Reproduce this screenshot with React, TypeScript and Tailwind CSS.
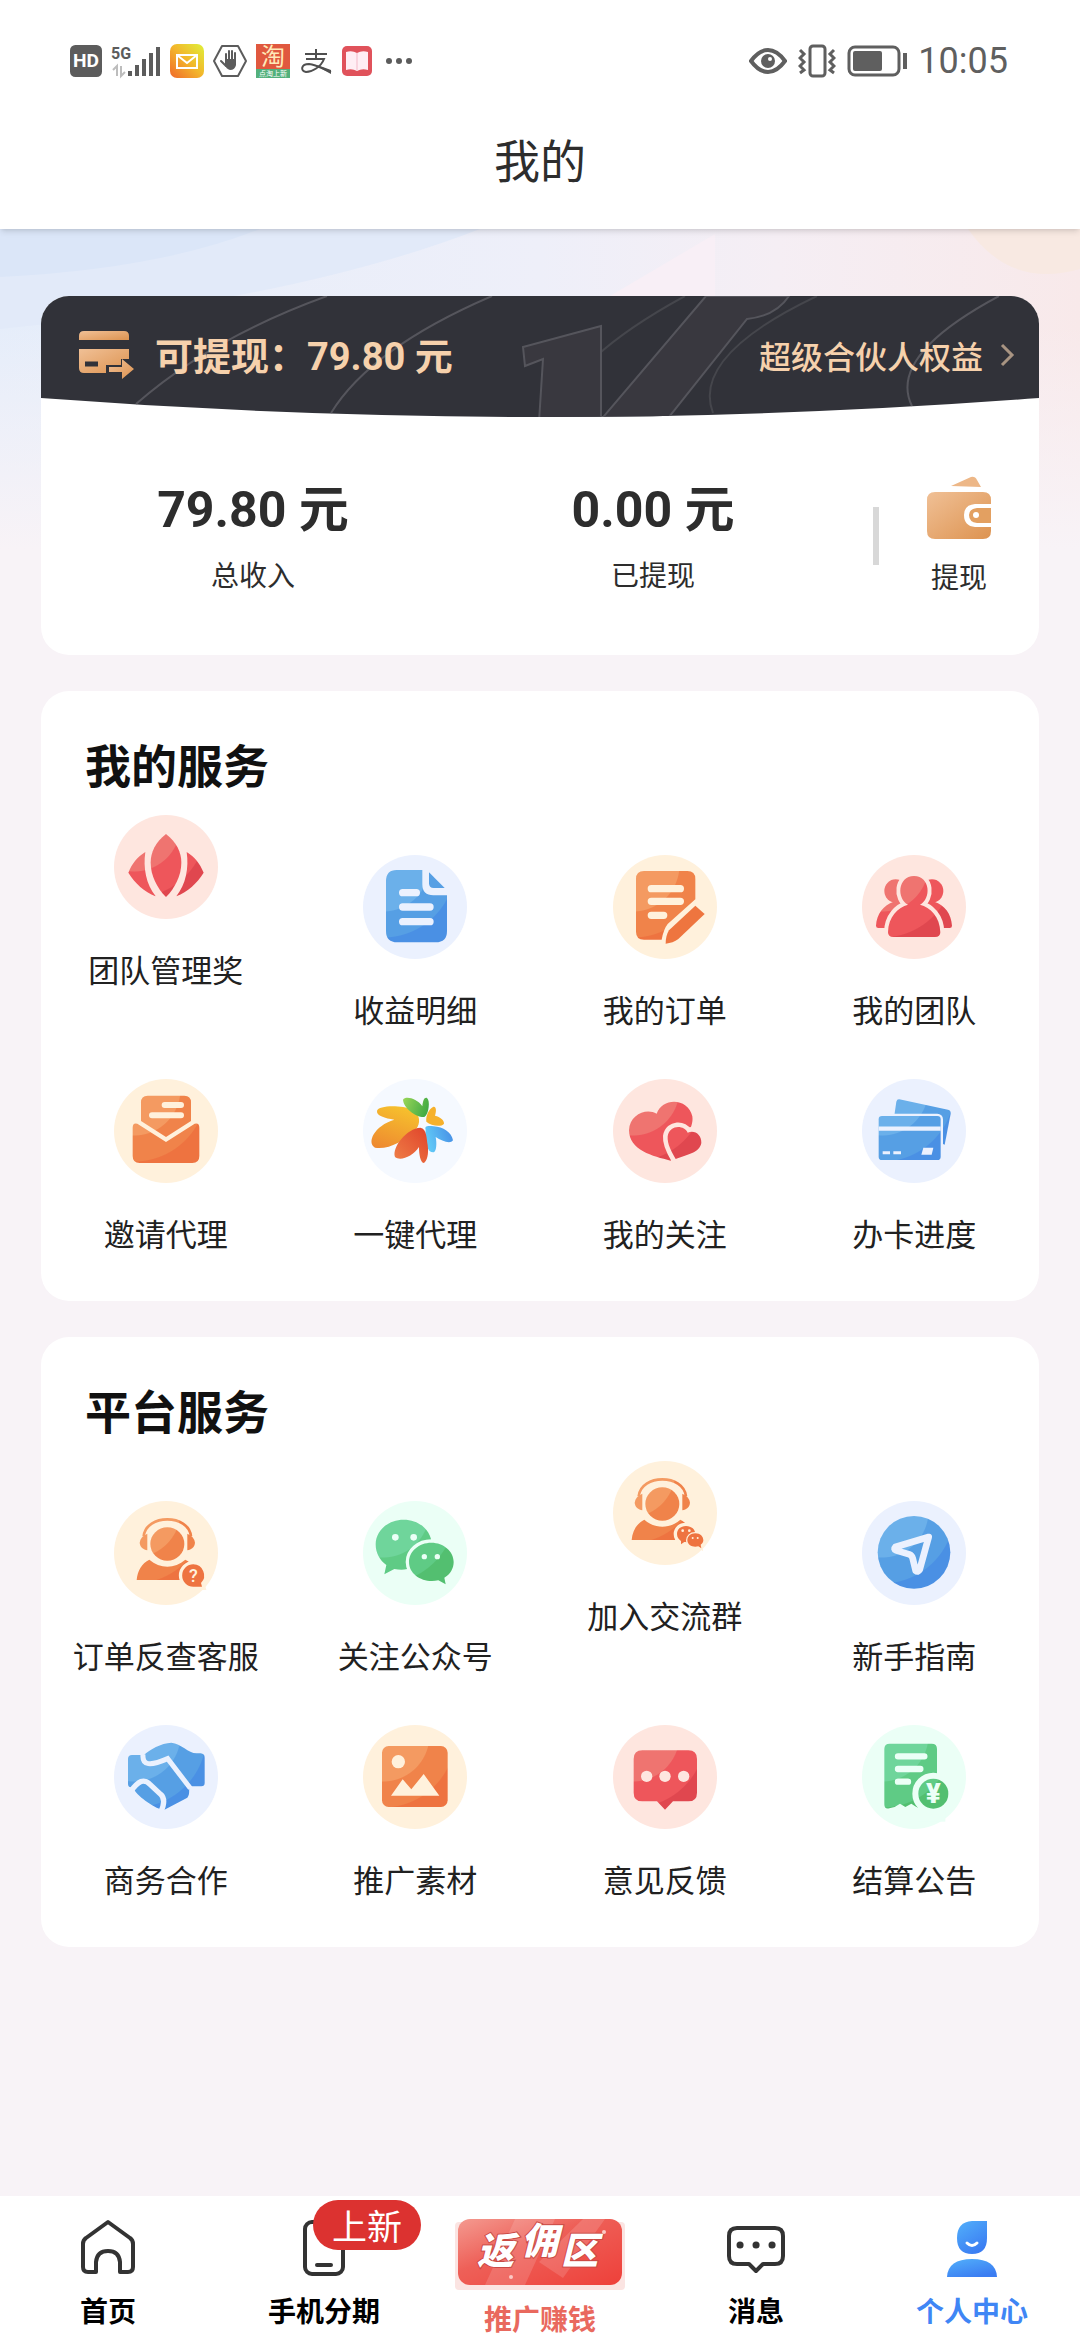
import type { ReactNode } from 'react'

type Tone = 'red' | 'orange' | 'blue' | 'green' | 'rainbow'

type Service = {
  label: string
  tone: Tone
  art: ReactNode
  raised?: boolean
}

const DISC: Record<Tone, string> = {
  red: '#fee6df',
  orange: '#fff1dc',
  blue: '#ebf1fe',
  green: '#ebfff6',
  rainbow: '#f5f9ff',
}

const SHADES: { tone: Tone; light: string; mid: string; deep: string }[] = [
  { tone: 'red', light: '#ef7470', mid: '#ee565b', deep: '#e0474f' },
  { tone: 'orange', light: '#f49a61', mid: '#f0834a', deep: '#ee7340' },
  { tone: 'blue', light: '#6bb0ea', mid: '#569fe4', deep: '#4a90e4' },
  { tone: 'green', light: '#6fd59b', mid: '#5fcb85', deep: '#53bf70' },
]

function Shades() {
  return (
    <svg className="absolute size-0" aria-hidden>
      <defs>
        {SHADES.map((s) => (
          <radialGradient
            key={s.tone}
            id={`shade-${s.tone}`}
            gradientUnits="userSpaceOnUse"
            cx="60"
            cy="30"
            r="300"
          >
            <stop offset="0.1" stopColor={s.light} />
            <stop offset="0.46" stopColor={s.light} />
            <stop offset="0.47" stopColor={s.mid} />
            <stop offset="0.72" stopColor={s.mid} />
            <stop offset="0.73" stopColor={s.deep} />
          </radialGradient>
        ))}
        <linearGradient id="gold" x1="0" y1="0" x2="1" y2="1">
          <stop offset="0" stopColor="#f0c096" />
          <stop offset="1" stopColor="#dd9350" />
        </linearGradient>
        <linearGradient id="member" x1="0" y1="0" x2="0.6" y2="1">
          <stop offset="0" stopColor="#52b0fb" />
          <stop offset="1" stopColor="#3b7df2" />
        </linearGradient>
        <linearGradient id="rebate" x1="0" y1="0" x2="1" y2="1">
          <stop offset="0" stopColor="#f49a90" />
          <stop offset="0.4" stopColor="#ee6058" />
          <stop offset="1" stopColor="#ee403a" />
        </linearGradient>
        <linearGradient id="mail" x1="1" y1="0" x2="0" y2="1">
          <stop offset="0" stopColor="#dff03a" />
          <stop offset="0.5" stopColor="#f3b52b" />
          <stop offset="1" stopColor="#f0682b" />
        </linearGradient>
        <linearGradient id="petal-yellow" x1="0.6" y1="0" x2="0.2" y2="1">
          <stop offset="0" stopColor="#f6c02d" />
          <stop offset="1" stopColor="#ee8a30" />
        </linearGradient>
        <linearGradient id="petal-red" x1="1" y1="0" x2="0" y2="1">
          <stop offset="0" stopColor="#e0432a" />
          <stop offset="1" stopColor="#ef8048" />
        </linearGradient>
        <linearGradient id="petal-green" x1="0" y1="0" x2="1" y2="0.3">
          <stop offset="0" stopColor="#9ad658" />
          <stop offset="1" stopColor="#46ac45" />
        </linearGradient>
        <linearGradient id="petal-blue" x1="0" y1="0.6" x2="1" y2="0.3">
          <stop offset="0" stopColor="#62cdf8" />
          <stop offset="1" stopColor="#4790e6" />
        </linearGradient>
      </defs>
    </svg>
  )
}

function Agent() {
  return (
    <>
      <path
        d="M89 106 C96 38 224 38 231 106"
        fill="none"
        stroke="url(#shade-orange)"
        strokeWidth="8"
      />
      <path d="M100 98 V148 C88 146 78 138 77 125 C78 113 86 104 100 98Z" />
      <path d="M220 98 V148 C232 146 242 138 243 125 C242 113 234 104 220 98Z" />
      <ellipse cx="160" cy="129" rx="51" ry="50" />
      <path d="M68 237 C70 210 84 186 106 176 C138 204 182 204 214 176 C236 186 250 210 252 237Z" />
    </>
  )
}

const MY_SERVICES: Service[] = [
  {
    label: '团队管理奖',
    tone: 'red',
    raised: true,
    art: (
      <>
        <path d="M156 57 C188 82 202 112 202 143 C202 182 182 220 156 246 C130 220 110 182 110 143 C110 112 124 82 156 57Z" />
        <path d="M94 111 C70 126 54 146 43 173 C64 206 90 230 125 244 C96 208 87 158 94 111Z" />
        <path d="M218 111 C242 126 258 146 269 173 C248 206 222 230 187 244 C216 208 225 158 218 111Z" />
      </>
    ),
  },
  {
    label: '收益明细',
    tone: 'blue',
    art: (
      <>
        <path d="M101 45 H178 V88 Q178 121 211 121 H252 V228 Q252 262 218 262 H103 Q69 262 69 228 V79 Q69 45 101 45Z" />
        <path d="M198 52 L245 99 H212 Q198 99 198 85Z" />
        <path d="M119 113 H160 M119 156 H201 M119 200 H201" fill="none" stroke="#ebf1fe" strokeWidth="22" strokeLinecap="round" />
      </>
    ),
  },
  {
    label: '我的订单',
    tone: 'orange',
    art: (
      <>
        <path d="M93 48 H223 Q247 48 247 72 V133 L164 207 Q152 222 146 254 H93 Q69 254 69 230 V72 Q69 48 93 48Z" />
        <path d="M115 101 H202 M115 139 H202 M115 181 H152" fill="none" stroke="#fff1dc" strokeWidth="22" strokeLinecap="round" />
        <path d="M247 152 L275 177 L196 252 Q180 264 158 266 Q158 242 168 226Z" fill="#ee753f" />
      </>
    ),
  },
  {
    label: '我的团队',
    tone: 'red',
    art: (
      <>
        <ellipse cx="101" cy="108" rx="34" ry="35" />
        <ellipse cx="210" cy="108" rx="34" ry="35" />
        <path d="M42 212 C44 176 65 150 95 140 H217 C248 150 268 176 270 212 Q270 219 263 219 H238 L156 180 L72 219 H49 Q42 219 42 212Z" />
        <path
          d="M94 246 Q78 246 78 232 C79 185 108 157 138 149 C104 132 106 64 156 63 C206 64 208 132 174 149 C205 157 234 185 235 232 Q235 246 219 246Z"
          stroke="#fee6df"
          strokeWidth="24"
          paintOrder="stroke"
        />
      </>
    ),
  },
  {
    label: '邀请代理',
    tone: 'orange',
    art: (
      <>
        <path d="M101 50 H211 Q231 50 231 70 V126 L156 174 L81 126 V70 Q81 50 101 50Z" />
        <path d="M152 78 H201 M114 109 H201" fill="none" stroke="#fff1dc" strokeWidth="18" strokeLinecap="round" />
        <path d="M56 146 Q56 130 70 134 L156 189 L242 134 Q256 130 256 146 V231 Q256 252 235 252 H77 Q56 252 56 231Z" />
      </>
    ),
  },
  {
    label: '一键代理',
    tone: 'rainbow',
    art: (
      <>
        <path d="M42 96 C46 78 116 78 148 92 C172 106 174 132 158 152 C130 184 72 214 36 206 C10 190 34 140 94 122 C66 118 40 110 42 96Z" fill="url(#petal-yellow)" />
        <path d="M120 62 C128 50 162 58 178 82 C180 64 184 54 192 57 C202 64 198 106 184 114 C160 116 122 88 120 62Z" fill="url(#petal-green)" />
        <path d="M210 84 C218 80 222 92 216 110 C232 114 244 124 243 134 C234 146 204 140 190 128 C188 110 198 90 210 84Z" fill="#f6b12b" />
        <path d="M188 152 C184 140 194 140 212 142 C240 144 266 160 270 184 C262 196 236 186 218 174 C222 194 220 218 212 220 C194 222 184 190 188 152Z" fill="url(#petal-blue)" />
        <path d="M96 234 C86 204 132 148 172 146 C192 150 190 178 194 198 C198 224 192 248 182 252 C172 250 168 226 168 204 C150 232 112 248 96 234Z" fill="url(#petal-red)" />
      </>
    ),
  },
  {
    label: '我的关注',
    tone: 'red',
    art: (
      <>
        <path d="M173 245 C120 232 48 214 48 154 C50 106 100 86 131 104 C148 54 226 56 238 112 C244 150 206 190 173 245Z" />
        <path
          d="M188 240 C176 220 162 194 164 172 C170 136 214 138 224 161 C246 152 266 168 265 192 C260 222 222 226 188 240Z"
          stroke="#fee6df"
          strokeWidth="28"
          paintOrder="stroke"
        />
      </>
    ),
  },
  {
    label: '办卡进度',
    tone: 'blue',
    art: (
      <>
        <path d="M112 61 L258 92 Q267 94 266 104 L248 197 L94 130 L103 68 Q105 60 112 61Z" />
        <rect x="50" y="111" width="186" height="132" rx="10" stroke="#ebf1fe" strokeWidth="14" paintOrder="stroke" />
        <path d="M50 149 H236" stroke="#ebf1fe" strokeWidth="13" />
        <path d="M62 221 H84 M94 221 H117" stroke="#ebf1fe" strokeWidth="9" />
        <path d="M184 206 H214 L209 227 H178Z" fill="#ebf1fe" />
      </>
    ),
  },
]

const PLATFORM_SERVICES: Service[] = [
  {
    label: '订单反查客服',
    tone: 'orange',
    art: (
      <>
        <Agent />
        <path
          d="M238 190 A33 33 0 1 0 238 257 H264 L261 246 A33 33 0 0 0 238 190Z"
          fill="#ee7340"
          stroke="#fff1dc"
          strokeWidth="20"
          paintOrder="stroke"
        />
        <text x="238" y="243" textAnchor="middle" fontSize="54" fontWeight="500" fill="#fff1dc" fontFamily="Roboto, sans-serif">
          ?
        </text>
      </>
    ),
  },
  {
    label: '关注公众号',
    tone: 'green',
    art: (
      <>
        <path d="M122 56 C74 56 38 90 38 130 C38 156 50 178 70 192 L64 220 L94 204 C150 214 206 184 206 130 C206 90 170 56 122 56Z" />
        <circle cx="97" cy="109" r="10" fill="#ebfff6" />
        <circle cx="152" cy="109" r="10" fill="#ebfff6" />
        <path
          d="M205 125 C168 125 138 151 138 183 C138 222 182 248 226 238 L248 250 L244 230 C262 220 272 202 272 183 C272 151 242 125 205 125Z"
          stroke="#ebfff6"
          strokeWidth="20"
          paintOrder="stroke"
        />
        <circle cx="184" cy="167" r="8" fill="#ebfff6" />
        <circle cx="223" cy="167" r="8" fill="#ebfff6" />
      </>
    ),
  },
  {
    label: '加入交流群',
    tone: 'orange',
    raised: true,
    art: (
      <>
        <g transform="translate(-12 0)">
          <Agent />
        </g>
        <g fill="#ee7340" stroke="#fff1dc" paintOrder="stroke">
          <path d="M219 195 C202 195 192 206 192 219 C192 230 198 236 204 240 V250 L214 243 C236 246 247 232 247 219 C247 206 236 195 219 195Z" strokeWidth="20" />
          <path d="M247 217 C232 217 223 227 223 238 C223 252 240 261 256 256 L265 262 L263 251 C268 248 271 243 271 238 C271 227 262 217 247 217Z" strokeWidth="8" />
        </g>
        <g fill="#fff1dc">
          <circle cx="209" cy="209" r="4" />
          <circle cx="229" cy="209" r="4" />
          <circle cx="239" cy="231" r="3" />
          <circle cx="254" cy="231" r="3" />
        </g>
      </>
    ),
  },
  {
    label: '新手指南',
    tone: 'blue',
    art: (
      <>
        <circle cx="156" cy="154" r="109" />
        <path
          d="M200 108 L100 138 Q94 144 102 148 L142 160 Q150 163 152 172 L161 209 Q168 215 173 206Z"
          fill="none"
          stroke="#ebf1fe"
          strokeWidth="20"
          strokeLinejoin="round"
        />
      </>
    ),
  },
  {
    label: '商务合作',
    tone: 'blue',
    art: (
      <>
        <path d="M42 102 Q42 90 54 90 H90 C106 74 142 54 172 53 C202 56 222 84 248 85 H260 Q272 86 272 98 V174 Q272 184 262 184 H228 C222 190 230 206 220 218 L150 255 C130 256 70 214 62 196 L56 187 H50 Q42 186 42 176Z" />
        <path
          d="M87 88 C84 122 108 124 161 101 L229 190"
          fill="none"
          stroke="#ebf1fe"
          strokeWidth="15"
        />
        <path
          d="M48 202 C74 166 90 160 108 178 L140 208 Q158 224 140 262"
          fill="none"
          stroke="#ebf1fe"
          strokeWidth="16"
        />
      </>
    ),
  },
  {
    label: '推广素材',
    tone: 'orange',
    art: (
      <>
        <rect x="57" y="63" width="197" height="183" rx="20" />
        <circle cx="106" cy="110" r="20" fill="#fff1dc" />
        <path d="M84 212 L119 163 L145 193 L182 147 L229 212Z" fill="#fff1dc" />
      </>
    ),
  },
  {
    label: '意见反馈',
    tone: 'red',
    art: (
      <>
        <path d="M88 76 H226 Q252 76 252 102 V203 Q252 229 226 229 H180 L156 254 L132 229 H88 Q62 229 62 203 V102 Q62 76 88 76Z" />
        <g fill="#fee6df">
          <circle cx="101" cy="154" r="17" />
          <circle cx="156" cy="154" r="17" />
          <circle cx="212" cy="154" r="17" />
        </g>
      </>
    ),
  },
  {
    label: '结算公告',
    tone: 'green',
    art: (
      <>
        <path d="M83 56 H209 Q225 56 225 72 V251 H176 L162 245 L148 236 L130 246 L114 236 L98 246 L82 250 Q67 254 67 238 V72 Q67 56 83 56Z" />
        <path d="M108 94 H187 M108 132 H175 M108 170 H138" fill="none" stroke="#ebfff6" strokeWidth="19" strokeLinecap="round" />
        <path d="M168 216 H250 V290 H168Z" fill="#ebfff6" />
        <circle cx="214" cy="206" r="45" stroke="#ebfff6" strokeWidth="36" paintOrder="stroke" />
        <text x="214" y="235" textAnchor="middle" fontSize="82" fontWeight="900" fill="#ebfff6" fontFamily="Roboto, sans-serif">
          ¥
        </text>
      </>
    ),
  },
]

function ServiceLink({ label, tone, art, raised }: Service) {
  return (
    <a href="#" className={`flex flex-col items-center gap-[30px] ${raised ? 'pb-10' : ''}`}>
      <svg viewBox="0 0 312 312" className="size-[104px]" aria-hidden>
        <circle cx="156" cy="156" r="156" fill={DISC[tone]} />
        <g fill={`url(#shade-${tone})`}>{art}</g>
      </svg>
      <span className="text-[31px] leading-10 whitespace-nowrap text-[#212121]">{label}</span>
    </a>
  )
}

function ServiceCard({ title, items }: { title: string; items: Service[] }) {
  return (
    <section className="rounded-[28px] bg-white pt-10 pb-12">
      <h2 className="mb-5 px-11 text-[46px] leading-16 font-bold text-[#111]">{title}</h2>
      <div className="grid grid-cols-4 items-end gap-y-[50px]">
        {items.map((item) => (
          <ServiceLink key={item.label} {...item} />
        ))}
      </div>
    </section>
  )
}

function StatusBar() {
  return (
    <div className="flex h-[70px] items-center justify-between pr-[72px] pl-[70px] text-[#5f5f5f]">
      <div className="flex items-center gap-[9px]">
        <svg viewBox="0 0 30 30" className="size-8" aria-hidden>
          <rect width="30" height="30" rx="5" fill="#5c5c5c" />
          <text x="15" y="21" textAnchor="middle" fontSize="18" fontWeight="700" fill="#fff" fontFamily="Roboto, sans-serif">
            HD
          </text>
        </svg>
        <svg viewBox="0 0 50 32" className="h-8 w-[50px] overflow-visible" aria-hidden>
          <text x="0" y="14" fontSize="16" fontWeight="700" fill="#5c5c5c" fontFamily="Roboto, sans-serif">
            5G
          </text>
          <path d="M2 25 L6 21 V31 M10 21 V31 L14 27" fill="none" stroke="#bdbdbd" strokeWidth="2" />
          <path d="M19 26 V31 M26 20 V31 M33 14 V31 M40 8 V31 M47 2 V31" stroke="#5c5c5c" strokeWidth="4" />
        </svg>
        <svg viewBox="0 0 34 34" className="size-[34px]" aria-hidden>
          <rect width="34" height="34" rx="7" fill="url(#mail)" />
          <path d="M7 11 H27 V24 H7Z M7 11 L17 19 L27 11" fill="none" stroke="#fff" strokeWidth="2" />
        </svg>
        <svg viewBox="0 0 34 34" className="size-[34px]" aria-hidden>
          <path d="M9 2 H25 L33 17 L25 32 H9 L1 17Z" fill="none" stroke="#5c5c5c" strokeWidth="2" strokeLinejoin="round" />
          <path d="M13 17 V10 M16 16 V7 M19 16 V7 M22 17 V9 M8 17 L13 22" stroke="#5c5c5c" strokeWidth="2" strokeLinecap="round" />
          <path d="M12 15 H23 V21 Q22 26 17 26 Q13 25 12 21Z" fill="#5c5c5c" />
        </svg>
        <svg viewBox="0 0 34 34" className="size-[34px] overflow-visible" aria-hidden>
          <rect width="34" height="25" fill="#e0583f" />
          <rect y="25" width="34" height="9" fill="#53b07c" />
          <text x="17" y="21" textAnchor="middle" fontSize="24" fill="#ffe9b8" fontFamily="'Noto Sans CJK SC', sans-serif">
            淘
          </text>
          <text x="17" y="32" textAnchor="middle" fontSize="7" fill="#fff" fontFamily="'Noto Sans CJK SC', sans-serif">
            点淘上新
          </text>
        </svg>
        <svg viewBox="0 0 34 34" className="size-[34px]" aria-hidden>
          <path
            d="M6 10 H28 M17 5 V15 M7 15 H25 C22 23 13 28 7 28 C1 27 2 20 10 20 C18 21 24 25 32 28"
            fill="none"
            stroke="#4f4f4f"
            strokeWidth="2"
          />
          <path d="M17 21 Q25 23 32 26 V30 Q24 26 17 21Z" fill="#4f4f4f" />
        </svg>
        <svg viewBox="0 0 30 30" className="size-[30px]" aria-hidden>
          <rect width="30" height="30" rx="5" fill="#e0525b" />
          <path d="M4 6 Q10 4 15 7 Q20 4 26 6 V24 Q20 22 15 25 Q10 22 4 24Z" fill="#ffeef4" />
          <path d="M15 7 V24" stroke="#f3b9c8" strokeWidth="1" />
        </svg>
        <svg viewBox="0 0 28 6" className="ml-1 h-1.5 w-7" fill="#5c5c5c" aria-hidden>
          <circle cx="4" cy="3" r="3" />
          <circle cx="14" cy="3" r="3" />
          <circle cx="24" cy="3" r="3" />
        </svg>
      </div>
      <div className="flex items-center gap-[11px]">
        <svg viewBox="0 0 38 26" className="h-[26px] w-[38px]" aria-hidden>
          <path d="M2 13 Q10 2 19 2 Q28 2 36 13 Q28 24 19 24 Q10 24 2 13Z" fill="none" stroke="#5f5f5f" strokeWidth="4" />
          <circle cx="19" cy="13" r="7" fill="#5f5f5f" />
          <circle cx="21" cy="11" r="2" fill="#fff" />
        </svg>
        <svg viewBox="0 0 38 34" className="h-[34px] w-[38px]" fill="none" stroke="#5f5f5f" strokeWidth="3" aria-hidden>
          <rect x="12" y="2" width="15" height="30" rx="3" />
          <path d="M2 6 L6 10 L2 14 L6 18 L2 22 L6 26 L2 29 M36 6 L32 10 L36 14 L32 18 L36 22 L32 26 L36 29" />
        </svg>
        <svg viewBox="0 0 60 32" className="h-8 w-[60px]" aria-hidden>
          <rect x="2" y="2" width="50" height="28" rx="6" fill="none" stroke="#5f5f5f" strokeWidth="3" />
          <rect x="6" y="6" width="29" height="20" rx="2" fill="#5f5f5f" />
          <path d="M58 8 V24" stroke="#5f5f5f" strokeWidth="4" />
        </svg>
        <span className="font-['Roboto',sans-serif] text-[36px] leading-10">10:05</span>
      </div>
    </div>
  )
}

function Backdrop() {
  return (
    <svg
      viewBox="0 0 1080 320"
      preserveAspectRatio="none"
      className="absolute inset-x-0 top-0 -z-10 h-[320px] w-full"
      aria-hidden
    >
      <defs>
        <linearGradient id="sky" x1="0" y1="0" x2="1" y2="0">
          <stop offset="0" stopColor="#e5edfa" />
          <stop offset="0.5" stopColor="#eeeff9" />
          <stop offset="0.72" stopColor="#f5eef4" />
          <stop offset="1" stopColor="#f8e9ea" />
        </linearGradient>
        <linearGradient id="fade" x1="0" y1="0" x2="0" y2="1">
          <stop offset="0.3" stopColor="#f8f3f7" stopOpacity="0" />
          <stop offset="1" stopColor="#f8f3f7" />
        </linearGradient>
      </defs>
      <rect width="1080" height="320" fill="url(#sky)" />
      <path d="M0 0 H480 Q300 70 0 100Z" fill="#e2eaf9" />
      <path d="M0 0 H260 Q160 40 0 48Z" fill="#dbe6f8" />
      <path d="M715 5 L610 67 H715Z" fill="#f8eff6" />
      <path d="M968 0 H1080 V40 Q1010 60 968 0Z" fill="#f8e9e2" />
      <rect width="1080" height="320" fill="url(#fade)" />
    </svg>
  )
}

function BandArt() {
  return (
    <svg viewBox="0 0 998 122" preserveAspectRatio="none" className="absolute inset-0 size-full" aria-hidden>
      <clipPath id="band">
        <path d="M0 0 H998 V102 Q748 121 499 121 Q250 121 0 102Z" />
      </clipPath>
      <g clipPath="url(#band)" fill="none" stroke="#55555c" strokeWidth="2">
        <rect width="998" height="122" fill="#313239" stroke="none" />
        <path d="M286 0 Q170 42 95 108" />
        <path d="M451 0 Q330 52 290 117" />
        <path d="M644 0 Q530 62 513 120" stroke="#45464c" />
        <path d="M776 0 Q650 60 672 117" stroke="#45464c" />
        <path d="M958 0 Q846 60 871 110" />
        <path d="M560 30 L482 51 L484 70 L502 63 L498 126 H560Z" fill="#39383f" />
        <path d="M665 0 L558 126 H624 L706 23 Q735 20 748 0Z" fill="#39383f" />
      </g>
    </svg>
  )
}

function BalanceCard() {
  return (
    <section className="overflow-hidden rounded-[28px] bg-white text-[#2d2d2d]">
      <div className="relative h-[122px]">
        <BandArt />
        <div className="relative flex h-full items-center justify-between pr-6 pb-1 pl-[38px] text-[#f6d1ac]">
          <div className="flex items-center gap-5">
            <svg viewBox="0 0 56 48" className="h-12 w-14" fill="url(#gold)" aria-hidden>
              <path d="M5 0 H45 Q50 0 50 5 V9 H0 V5 Q0 0 5 0Z" />
              <path d="M0 18 H50 V28 H42 V34 H27 V42 H5 Q0 42 0 37Z" />
              <path d="M6 33 H19" stroke="#313239" strokeWidth="5" />
              <path d="M30 36 H43 V28 L55 38 L43 48 V41 H30Z" />
            </svg>
            <p className="text-[38px] leading-14 font-bold">
              可提现：<span className="font-['Roboto','Noto_Sans_CJK_SC',sans-serif]">79.80 元</span>
            </p>
          </div>
          <a href="#" className="flex items-center gap-4 text-[32px] leading-10 font-medium">
            超级合伙人权益
            <svg viewBox="0 0 16 24" className="h-6 w-4" aria-hidden>
              <path d="M3 2 L13 12 L3 22" fill="none" stroke="#a89482" strokeWidth="3" />
            </svg>
          </a>
        </div>
      </div>
      <div className="grid grid-cols-[2fr_2fr_186px] items-center pt-[58px] pb-[59px] pl-3">
        <Stat label="总收入" value="79.80 元" />
        <Stat label="已提现" value="0.00 元" />
        <div className="flex items-center gap-12 pl-5">
          <span className="h-[58px] w-1.5 bg-[#d8d8d8]" />
          <button type="button" className="flex flex-col items-center gap-4">
            <svg viewBox="0 0 64 64" className="size-16" aria-hidden>
              <path d="M24 10 L44 1 Q48 0 50 4 L54 11Z" fill="#edb787" />
              <path d="M8 16 H56 Q64 16 64 24 V28 H48 Q37 29 37 39 Q37 50 48 51 H64 V55 Q64 63 56 63 H8 Q0 63 0 55 V24 Q0 16 8 16Z" fill="url(#gold)" />
              <path d="M64 32 H50 Q42 33 42 39 Q42 46 50 47 H64Z" fill="#e3a061" />
              <circle cx="49" cy="39" r="3" fill="#fff" />
            </svg>
            <span className="text-[28px] leading-10">提现</span>
          </button>
        </div>
      </div>
    </section>
  )
}

function Stat({ label, value }: { label: string; value: string }) {
  return (
    <div className="flex flex-col items-center gap-3">
      <strong className="font-['Roboto','Noto_Sans_CJK_SC',sans-serif] text-[50px] leading-16 font-bold">{value}</strong>
      <span className="text-[28px] leading-10">{label}</span>
    </div>
  )
}

const LINE = {
  fill: 'none',
  stroke: '#333',
  strokeWidth: 4,
  strokeLinejoin: 'round' as const,
  strokeLinecap: 'round' as const,
}

function BottomNav() {
  return (
    <nav className="mt-auto grid grid-cols-5 items-start bg-white pt-5.5 pb-1 text-[28px] leading-9 font-bold text-black">
      <a href="#" className="flex flex-col items-center gap-3.5">
        <svg viewBox="0 0 60 60" className="size-[60px]" {...LINE} aria-hidden>
          <path d="M30 4 L52 20 Q55 22 55 26 V49 Q55 54 50 54 H42 V44 Q41 33 30 33 Q19 33 18 44 V54 H10 Q5 54 5 49 V26 Q5 22 8 20Z" />
        </svg>
        首页
      </a>
      <a href="#" className="flex flex-col items-center gap-3.5">
        <span className="relative">
          <svg viewBox="0 0 60 60" className="size-[60px]" {...LINE} aria-hidden>
            <rect x="11" y="4" width="38" height="52" rx="7" />
            <path d="M23 47 H37" />
          </svg>
          <span className="absolute -top-[18px] left-[19px] rounded-full bg-[#dc3230] px-[19px] text-[35px] leading-[50px] font-normal whitespace-nowrap text-white">
            上新
          </span>
        </span>
        手机分期
      </a>
      <a href="#" className="flex flex-col items-center gap-2.5 text-[#e9695e]">
        <svg viewBox="0 0 170 72" className="h-[72px] w-[170px] overflow-visible" aria-hidden>
          <rect y="4" width="170" height="68" rx="4" fill="#fbe4e2" />
          <rect x="3" y="1" width="164" height="66" rx="12" fill="url(#rebate)" />
          <path d="M60 1 H100 L70 67 H30Z M128 1 H150 L108 60 L84 44Z" fill="#fff" opacity="0.14" />
          <g
            fill="#fff"
            stroke="#c94a45"
            strokeWidth="2"
            paintOrder="stroke"
            fontSize="37"
            fontWeight="900"
            fontStyle="italic"
            fontFamily="'Noto Sans CJK SC', sans-serif"
          >
            <text x="22" y="46">返</text>
            <text x="66" y="36">佣</text>
            <text x="106" y="46">区</text>
          </g>
          <circle cx="56" cy="59" r="2" fill="#fbc9c4" />
          <circle cx="149" cy="14" r="2" fill="#fbc9c4" />
        </svg>
        推广赚钱
      </a>
      <a href="#" className="flex flex-col items-center gap-3.5">
        <svg viewBox="0 0 60 60" className="size-[60px]" {...LINE} aria-hidden>
          <path d="M11 10 H49 Q57 10 57 18 V38 Q57 46 49 46 H37 L30 53 L23 46 H11 Q3 46 3 38 V18 Q3 10 11 10Z" />
          <path d="M14 27 H14.1 M30 27 H30.1 M46 27 H46.1" strokeWidth="7" />
        </svg>
        消息
      </a>
      <a href="#" aria-current="page" className="flex flex-col items-center gap-3.5 text-[#3f86f5]">
        <svg viewBox="0 0 60 60" className="size-[60px]" fill="url(#member)" aria-hidden>
          <path d="M30 3 H45 V20 Q45 36 30 36 Q15 36 15 20 Q15 4 30 3Z" />
          <path d="M25 25 Q30 30 35 25" fill="none" stroke="#fff" strokeWidth="3" strokeLinecap="round" />
          <path d="M5 59 Q6 41 30 41 Q54 41 55 59Z" />
        </svg>
        个人中心
      </a>
    </nav>
  )
}

export default function App() {
  return (
    <div className="flex min-h-screen flex-col bg-[#f8f3f7] font-['Noto_Sans_CJK_SC',sans-serif]">
      <Shades />
      <header className="relative z-10 bg-white pt-[26px] shadow-md">
        <StatusBar />
        <h1 className="pt-8 pb-10 text-center text-[46px] leading-[61px] text-[#2d2d2d]">我的</h1>
      </header>
      <main className="relative isolate flex flex-col gap-9 px-[41px] pt-[67px] pb-10">
        <Backdrop />
        <BalanceCard />
        <ServiceCard title="我的服务" items={MY_SERVICES} />
        <ServiceCard title="平台服务" items={PLATFORM_SERVICES} />
      </main>
      <BottomNav />
    </div>
  )
}
